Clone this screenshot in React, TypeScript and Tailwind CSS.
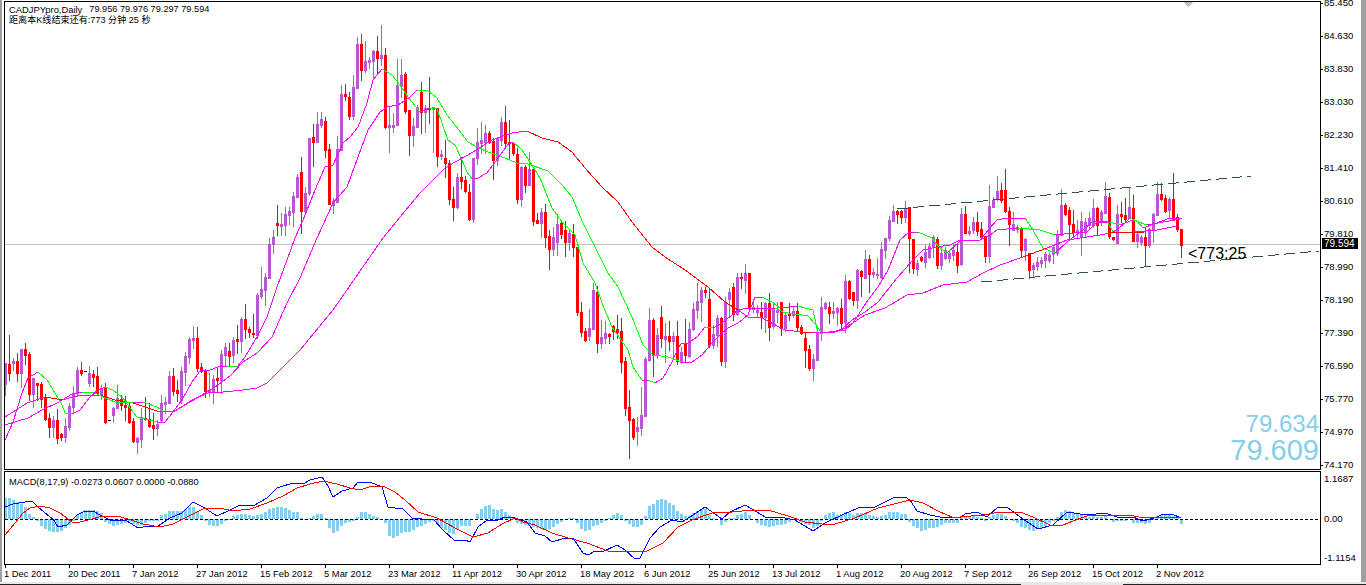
import React from "react";

type Candle = [string, number, number, number, number];

/* type, high, body top, body bottom, low - all in screen pixels */
const candles: Candle[] = [
  ["p",363,363,384,395],["r",335,364,373,380],["p",358,361,363,370],["r",353,361,373,381],["p",349,349,373,387],["r",343,349,355,364],["r",352,354,394,400],["p",378,378,394,407],["r",383,383,385,400],["r",382,384,399,407],
  ["r",394,398,419,420],["r",413,418,427,437],["p",416,420,427,437],["r",409,420,438,443],["r",433,434,437,440],["p",418,426,437,442],["p",403,406,427,430],["p",386,393,407,412],["p",367,370,393,396],["r",362,370,373,375],
  ["k",371,371,371,371],["p",366,373,383,386],["r",370,374,377,386],["r",367,376,393,395],["p",385,388,394,399],["r",383,388,422,423],["k",420,420,420,420],["p",407,408,415,422],["p",385,398,408,408],["r",395,399,405,410],
  ["r",396,405,407,420],["r",402,406,422,423],["r",418,421,441,442],["p",437,438,442,453],["p",408,417,439,447],["r",397,418,419,420],["r",403,419,426,427],["r",413,425,428,439],["p",420,424,428,435],["p",395,403,420,422],
  ["p",397,402,404,413],["p",371,376,403,403],["r",368,376,391,395],["r",380,390,393,401],["p",367,371,400,403],["p",352,356,372,385],["p",337,339,357,363],["p",326,338,340,348],["r",327,338,368,371],["r",363,367,371,372],
  ["r",369,370,391,397],["p",373,390,392,396],["p",375,379,392,403],["r",367,378,380,392],["p",350,354,380,393],["p",343,347,355,365],["r",343,351,356,365],["p",337,340,355,362],["r",325,339,341,353],["p",317,319,341,352],
  ["r",304,319,329,338],["r",327,329,332,337],["r",314,333,334,337],["p",293,295,335,338],["p",267,289,296,298],["p",273,277,290,305],["p",238,244,278,278],["p",230,237,244,253],["r",205,223,225,235],["p",213,224,226,235],
  ["p",207,214,225,235],["p",207,211,215,224],["p",192,196,212,226],["p",174,177,197,197],["r",157,172,211,233],["p",187,193,211,212],["p",138,138,193,195],["r",124,137,142,166],["p",112,124,142,142],["p",112,119,125,127],
  ["r",117,121,150,157],["r",144,149,204,204],["p",198,201,205,213],["p",136,149,202,202],["p",85,94,150,150],["r",84,94,96,100],["r",92,97,116,119],["p",75,87,116,119],["p",37,44,88,88],["r",34,44,70,80],
  ["p",41,61,70,72],["p",57,60,62,68],["p",50,51,61,79],["r",36,51,58,73],["p",25,55,58,65],["r",48,55,127,128],["p",107,125,127,152],["p",113,125,127,132],["p",59,85,125,125],["p",59,75,86,97],
  ["r",72,74,111,113],["r",110,110,135,155],["p",118,126,135,146],["p",105,107,127,127],["r",82,92,112,133],["p",105,108,112,132],["r",77,108,109,123],["p",107,107,109,152],["r",108,108,156,166],["p",150,154,156,159],
  ["r",140,158,163,177],["r",160,163,199,204],["r",187,199,207,220],["p",173,177,207,208],["r",157,177,181,188],["r",176,180,191,192],["r",184,192,219,220],["p",158,158,219,222],["p",128,142,158,164],["p",122,140,143,153],
  ["p",125,133,142,153],["r",131,133,142,143],["r",138,141,160,179],["p",137,138,160,165],["p",117,122,140,145],["r",106,122,143,148],["r",120,142,143,158],["r",142,143,153,155],["r",148,154,199,203],["p",166,167,199,206],
  ["r",165,167,185,192],["p",152,169,185,185],["r",167,169,221,225],["r",213,220,223,223],["p",208,212,223,237],["r",204,212,237,247],["r",230,236,249,269],["p",227,237,249,255],["p",214,224,242,255],["r",222,223,234,238],
  ["r",221,230,242,256],["p",230,233,242,250],["r",224,234,247,256],["r",247,247,312,315],["r",302,312,332,336],["r",328,331,340,341],["p",309,328,336,340],["p",283,290,329,329],["r",286,292,343,352],["p",320,337,343,348],
  ["p",321,333,338,343],["r",333,334,336,343],["r",325,326,331,339],["r",315,329,332,338],["r",318,331,362,372],["r",357,361,408,415],["r",390,407,420,458],["r",418,419,437,439],["p",417,427,431,445],["p",387,415,428,435],
  ["p",357,359,416,416],["p",308,320,360,361],["r",318,320,355,376],["p",328,335,355,358],["r",306,317,338,347],["p",323,336,339,362],["r",321,336,341,350],["p",332,336,341,358],["r",321,336,361,364],["p",347,352,362,363],
  ["r",319,343,355,362],["p",322,329,356,357],["p",303,309,329,330],["p",283,301,310,318],["p",287,290,302,321],["r",287,290,292,297],["r",288,299,345,347],["p",325,334,345,348],["p",315,318,335,346],["r",317,318,361,365],
  ["p",297,302,361,367],["p",288,292,299,315],["r",283,287,314,320],["p",273,277,314,315],["r",273,277,278,288],["p",264,273,280,293],["r",273,273,308,310],["p",300,307,309,312],["p",305,310,312,317],["r",302,312,317,328],
  ["p",302,303,317,332],["r",293,303,327,340],["p",302,308,326,328],["p",302,310,312,322],["r",302,302,328,335],["p",313,315,328,331],["r",303,313,315,320],["p",307,311,315,317],["r",303,311,327,330],["r",325,327,333,334],
  ["r",332,338,350,367],["r",345,349,368,370],["p",354,359,368,380],["p",332,333,360,360],["p",297,307,333,340],["p",302,303,308,309],["r",302,307,313,323],["p",302,311,313,318],["p",307,308,312,325],["r",299,308,323,327],
  ["p",275,281,322,332],["r",280,281,298,299],["r",292,292,300,305],["p",269,270,300,308],["r",270,271,276,296],["p",250,259,278,278],["r",255,259,274,292],["p",268,272,274,277],["p",258,274,275,278],["p",242,249,277,278],
  ["p",238,238,250,258],["p",216,220,238,240],["p",205,211,221,221],["r",210,211,214,223],["r",210,211,217,223],["p",201,208,217,222],["r",207,207,238,272],["r",239,239,268,273],["p",260,263,269,275],["r",256,257,260,261],
  ["p",245,252,262,267],["p",243,246,257,258],["p",235,237,247,257],["r",237,239,265,268],["p",247,253,265,269],["p",247,250,258,259],["p",250,253,258,262],["p",243,250,255,260],["r",243,252,265,272],["p",208,214,264,265],
  ["r",206,214,233,233],["p",226,231,233,235],["p",217,222,230,233],["r",212,222,231,235],["r",222,229,237,237],["r",236,236,256,262],["p",185,206,256,262],["p",197,200,207,207],["p",176,191,199,200],["r",183,190,200,202],
  ["r",169,190,211,212],["r",207,211,224,245],["p",212,224,230,230],["p",225,227,229,232],["r",227,229,250,257],["p",238,239,250,260],["r",253,253,270,278],["p",263,265,269,277],["p",257,262,266,270],["p",257,260,263,267],
  ["p",252,254,260,267],["p",253,255,260,262],["p",245,247,254,263],["p",230,235,253,255],["p",189,205,235,235],["r",203,205,214,215],["r",207,210,224,240],["r",210,224,232,237],["p",220,230,232,238],["p",212,221,237,255],
  ["p",218,222,232,237],["p",212,218,225,228],["p",199,208,225,227],["r",207,208,225,235],["p",210,212,222,225],["p",182,196,213,213],["r",193,197,236,238],["r",237,237,239,240],["p",205,214,243,243],["r",202,214,216,222],
  ["r",198,215,219,222],["p",187,207,218,218],["r",195,208,241,241],["p",233,234,241,247],["p",235,237,242,245],["r",228,237,245,265],["p",228,229,245,247],["p",213,214,230,242],["p",182,194,215,215],["r",183,194,199,200],
  ["r",195,198,211,212],["p",197,199,210,217],["r",173,199,220,220],["r",214,217,229,231],["r",229,229,245,257],
];

/* histogram height above (+) or below (-) the zero line */
const histogram = [
  21,21,19,17,15,12,5,2,-2,-7,-10,-12,-13,-13,-12,-9,-6,-2,4,7,9,9,9,8,6,-3,-5,-7,-6,-5,-4,-3,-5,-6,-6,-4,-2,-2,-2,4,
  5,8,8,8,8,10,12,12,8,4,-2,-6,-7,-7,-5,-2,-1,3,4,5,5,4,3,4,5,7,10,11,12,12,11,9,7,7,1,-1,1,3,5,5,
  1,-9,-14,-12,-7,-4,-3,-2,2,7,7,5,3,2,-1,-4,-17,-19,-17,-14,-13,-13,-11,-8,-7,-5,-3,-2,-5,-9,-11,-14,-15,-11,-7,-7,-7,0,5,10,
  13,14,10,9,10,7,4,2,-4,-5,-6,-7,-8,-9,-10,-11,-10,-8,-5,-3,-1,1,1,-4,-10,-12,-11,-7,-6,-4,-2,1,4,6,4,-2,-5,-8,-8,-6,
  3,13,15,19,20,19,16,14,8,5,3,3,6,8,10,10,4,1,0,-6,-3,1,1,4,5,7,4,0,-4,-6,-7,-8,-7,-6,-6,-5,-3,-1,0,-3,
  -5,-6,-9,-7,-2,4,6,7,4,5,7,6,4,6,6,5,4,3,2,3,4,7,7,7,5,5,-3,-7,-9,-12,-11,-9,-9,-8,-6,-4,-4,-4,-4,2,
  2,2,3,2,1,-2,2,4,5,5,3,0,-2,-4,-8,-9,-11,-12,-10,-9,-7,-4,-2,2,7,9,8,6,5,4,2,2,4,2,2,4,0,-3,-2,-2,
  -2,0,-4,-4,-4,-5,-4,-1,3,4,5,5,3,2,-5,
];

const fastMa = [5,440,13,422,22,393,28,378,38,372,47,380,55,393,62,405,65,413,72,414,80,410,90,397,98,390,105,387,113,390,123,398,130,408,137,417,145,419,157,422,165,422,173,412,182,400,192,382,200,371,210,370,218,367,227,366,237,367,245,357,257,337,267,317,277,287,287,260,295,238,303,220,315,190,325,167,333,165,343,143,350,137,358,127,367,103,373,80,382,69,392,75,400,85,408,97,420,112,430,108,437,109,448,140,455,145,462,160,467,172,472,179,478,178,487,173,498,158,510,142,513,142,522,150,530,162,540,178,552,208,562,222,575,235,583,263,595,283,602,303,612,327,628,350,633,367,642,380,648,380,655,383,663,378,672,362,678,348,682,343,688,343,697,337,705,327,713,328,722,323,732,315,738,310,748,308,763,308,775,308,783,312,788,313,802,315,808,316,815,324,822,333,836,331,845,330,853,323,866,303,878,287,888,270,900,240,908,233,918,232,932,238,938,246,947,253,960,241,980,240,990,228,997,220,1008,218,1025,218,1033,230,1043,248,1055,253,1067,242,1083,230,1093,221,1107,221,1113,232,1123,225,1130,218,1137,221,1143,228,1157,223,1170,218,1182,218];
const midMa = [5,425,28,418,42,410,57,403,72,394,82,392,95,393,105,398,115,402,133,403,143,402,157,407,163,411,175,411,190,402,207,392,218,385,230,376,243,362,257,353,272,337,287,303,300,278,317,238,333,203,347,187,358,157,368,130,380,112,387,107,398,105,410,97,417,90,428,91,437,98,447,115,455,125,468,142,477,147,488,152,505,158,517,163,528,164,548,171,562,185,572,197,583,223,595,247,608,273,618,287,632,317,643,345,653,355,668,357,682,362,692,362,702,355,712,343,722,333,728,328,738,323,748,315,755,297,762,297,772,302,780,308,798,306,805,308,813,310,818,333,835,332,843,328,852,320,865,312,878,302,897,278,913,260,923,250,937,247,950,245,960,240,980,240,990,235,997,230,1018,228,1040,230,1055,235,1073,233,1087,232,1097,222,1110,222,1120,225,1133,220,1147,225,1163,222,1180,219];
const slowMa = [5,417,27,403,45,397,63,400,72,397,83,395,100,395,115,400,133,403,157,411,175,411,192,400,208,393,223,392,243,390,257,388,267,383,300,350,333,310,383,238,400,217,420,193,445,168,455,162,468,155,492,140,512,133,527,131,542,138,558,142,572,152,585,168,602,187,618,202,632,222,652,247,665,257,685,270,708,287,725,302,738,310,748,317,762,318,785,330,812,333,835,332,845,328,865,315,885,308,907,295,923,293,943,285,967,282,983,273,1000,265,1023,257,1047,248,1067,240,1087,237,1100,235,1110,233,1133,232,1157,230,1177,226];

const macdBlue = [5,507,13,504,25,502,32,501,37,506,45,513,53,519,58,527,67,525,77,515,83,512,93,511,100,515,110,520,127,521,138,528,148,526,158,526,170,518,182,513,193,502,203,507,217,516,230,510,240,505,253,506,267,498,277,488,293,483,303,484,310,480,322,477,328,486,333,497,342,491,353,488,358,482,370,482,382,487,388,507,395,508,402,508,412,518,422,519,433,519,443,530,455,541,465,540,470,542,478,527,487,520,495,521,505,517,515,518,527,522,535,533,545,536,552,542,565,538,573,538,583,553,588,555,595,551,602,552,617,545,625,550,635,559,640,558,650,538,660,527,672,520,682,522,693,515,705,507,715,514,722,519,730,512,745,505,757,512,765,517,785,518,795,520,813,531,825,523,842,515,858,508,875,507,895,497,905,497,910,500,917,511,930,515,940,517,953,517,960,518,965,514,977,512,987,517,998,507,1008,508,1023,519,1038,529,1053,525,1067,512,1087,515,1105,513,1117,517,1133,517,1143,521,1157,517,1163,514,1172,514,1181,518];
const macdRed = [5,535,15,523,23,513,30,508,40,506,50,508,60,513,72,522,80,522,88,520,103,516,117,516,128,519,143,524,160,527,173,524,185,518,197,512,205,508,220,508,233,511,250,509,267,503,283,496,297,488,310,484,323,481,337,484,350,488,360,490,372,486,383,486,395,492,405,500,418,512,437,518,455,528,473,537,488,533,502,524,515,518,523,522,535,525,552,533,568,538,587,543,608,551,625,551,645,552,663,543,678,527,692,520,712,513,732,512,752,510,768,510,788,516,805,522,822,524,835,524,855,518,878,508,902,502,910,500,923,503,940,512,952,517,960,517,983,515,1000,512,1020,512,1033,517,1050,525,1063,525,1073,521,1087,516,1110,515,1130,515,1143,518,1160,517,1180,517];

const priceLabels = ["85.450","84.630","83.830","83.030","82.230","81.410","80.610","79.810","78.990","78.190","77.390","76.590","75.770","74.970","74.170"];
const macdLabels = ["1.1687","0.00","-1.1154"];
const dateLabels = ["1 Dec 2011","20 Dec 2011","7 Jan 2012","27 Jan 2012","15 Feb 2012","5 Mar 2012","23 Mar 2012","11 Apr 2012","30 Apr 2012","18 May 2012","6 Jun 2012","25 Jun 2012","13 Jul 2012","1 Aug 2012","20 Aug 2012","7 Sep 2012","26 Sep 2012","15 Oct 2012","2 Nov 2012"];

const polyline = (pts: number[]) => {
  let d = "";
  for (let i = 0; i < pts.length; i += 2) d += `${i ? "L" : "M"}${pts[i]} ${pts[i + 1]}`;
  return d;
};

/* rising parts of an average are magenta, falling parts take its own colour */
function MaLine({ pts, down }: { pts: number[]; down: string }) {
  let up = "";
  let dn = "";
  for (let i = 0; i + 3 < pts.length; i += 2) {
    const seg = `M${pts[i]} ${pts[i + 1]}L${pts[i + 2]} ${pts[i + 3]}`;
    if (pts[i + 3] <= pts[i + 1]) up += seg;
    else dn += seg;
  }
  return (
    <>
      <path d={dn} fill="none" stroke={down} />
      <path d={up} fill="none" stroke="#ff00ff" />
    </>
  );
}

function PriceChart() {
  return (
    <svg viewBox="5 2 1315 467" className="block h-[467px] w-[1315px]" shapeRendering="crispEdges">
      <line x1="5" y1="244.5" x2="1320" y2="244.5" stroke="#c0c0c0" />
      <polygon points="1183,2 1193,2 1188,7" fill="#c0c0c0" />
      {candles.map(([type, high, top, bottom, low], i) => {
        const fill = type === "r" ? "#ff0000" : type === "p" ? "#ba55d3" : "#000000";
        return (
          <g key={i} fill={fill}>
            <rect x={5 + 4 * i} y={high} width="1" height={low - high + 1} />
            <rect x={4 + 4 * i} y={top} width="3" height={bottom - top + 1} />
          </g>
        );
      })}
      <MaLine pts={slowMa} down="#ff0000" />
      <MaLine pts={midMa} down="#00ff00" />
      <MaLine pts={fastMa} down="#00ff00" />
      <path d="M738 310L748 317L762 318L785 330L802 332" fill="none" stroke="#ff00ff" />
      <path d="M1023 257L1047 248M1110 233L1145 232" fill="none" stroke="#ff0000" />
      <path d="M897 209L1251 176M981 282L1319 251" fill="none" stroke="#2f4f4f" strokeDasharray="11 5" />
    </svg>
  );
}

function MacdChart() {
  return (
    <svg viewBox="5 472 1315 92" className="block h-[92px] w-[1315px]" shapeRendering="crispEdges">
      {histogram.map((h, i) => (
        <rect key={i} x={4 + 4 * i} y={h > 0 ? 519 - h : 519} width="3" height={Math.abs(h)} fill="#87ceeb" />
      ))}
      <line x1="5" y1="519.5" x2="1320" y2="519.5" stroke="#000000" strokeDasharray="3 2" />
      <path d={polyline(macdBlue)} fill="none" stroke="#0000ff" />
      <path d={polyline(macdRed)} fill="none" stroke="#ff0000" />
    </svg>
  );
}

export default function App() {
  return (
    <div className="flex h-[585px] w-[1366px] flex-col overflow-hidden bg-white font-['Liberation_Sans','Noto_Sans_CJK_SC',sans-serif] text-black">
      <div className="flex h-[582px]">
        <div className="mr-[2px] w-[2px] shrink-0 bg-[#a0a0a0]" />

        <div className="flex w-[1317px] shrink-0 flex-col pt-px">
          {/* price panel */}
          <div className="relative h-[469px] border border-black">
            <PriceChart />
            <div className="absolute left-[4px] top-[2px] text-[9.4px] leading-[11px]">
              <div className="flex">
                <span>CADJPYpro,Daily</span>
                <span className="ml-[7px] text-[9.2px]">79.956 79.976 79.297 79.594</span>
              </div>
              <div className="text-[9.1px]">距离本K线结束还有:773 分钟 25 秒</div>
            </div>
            <div className="absolute left-[1183px] top-[243px] text-[16px] leading-[18px]">&lt;773:25</div>
            <div className="absolute bottom-[4px] right-[1px] text-right leading-none text-[#87ceeb]">
              <div className="text-[24px]">79.634</div>
              <div className="text-[29px]">79.609</div>
            </div>
          </div>

          {/* MACD panel */}
          <div className="relative mt-px h-[94px] border border-black">
            <MacdChart />
            <div className="absolute left-[4px] top-[4px] text-[9.3px] leading-[12px]">
              MACD(8,17,9) -0.0273 0.0607 0.0000 -0.0880
            </div>
          </div>

          {/* time axis */}
          <div className="flex">
            {dateLabels.map((d) => (
              <div key={d} className="w-[64px] shrink-0">
                <div className="ml-px h-[3px] w-px bg-black" />
                <div className="whitespace-nowrap text-[9.4px] leading-[12px]">{d}</div>
              </div>
            ))}
          </div>
        </div>

        {/* price axis */}
        <div className="relative w-[40px] shrink-0 text-[9.6px] leading-[6px]">
          <div className="flex flex-col gap-[27px]">
            {priceLabels.map((p) => (
              <div key={p} className="flex h-[6px] items-center">
                <div className="mr-px h-px w-[2px] bg-black" />
                <span>{p}</span>
              </div>
            ))}
          </div>
          <div className="mt-[8px] flex flex-col gap-[33.5px]">
            {macdLabels.map((m) => (
              <div key={m} className="flex h-[6px] items-center pl-[3px]">
                <span>{m}</span>
              </div>
            ))}
          </div>
          <div className="absolute left-px top-[238px] h-[11px] w-[36px] bg-black pl-[2px] text-[10px] leading-[11px] text-white">
            79.594
          </div>
        </div>

        <div className="w-[5px] shrink-0 bg-[#a0a0a0]" />
      </div>

      {/* bottom edge with the active tab gap */}
      <div className="flex h-[3px] bg-[#e8e8e8]">
        <div className="mt-auto h-px w-[1021px] shrink-0 bg-[#222222]" />
        <div className="w-[102px] shrink-0" />
        <div className="mt-auto h-px flex-1 bg-[#222222]" />
      </div>
    </div>
  );
}
